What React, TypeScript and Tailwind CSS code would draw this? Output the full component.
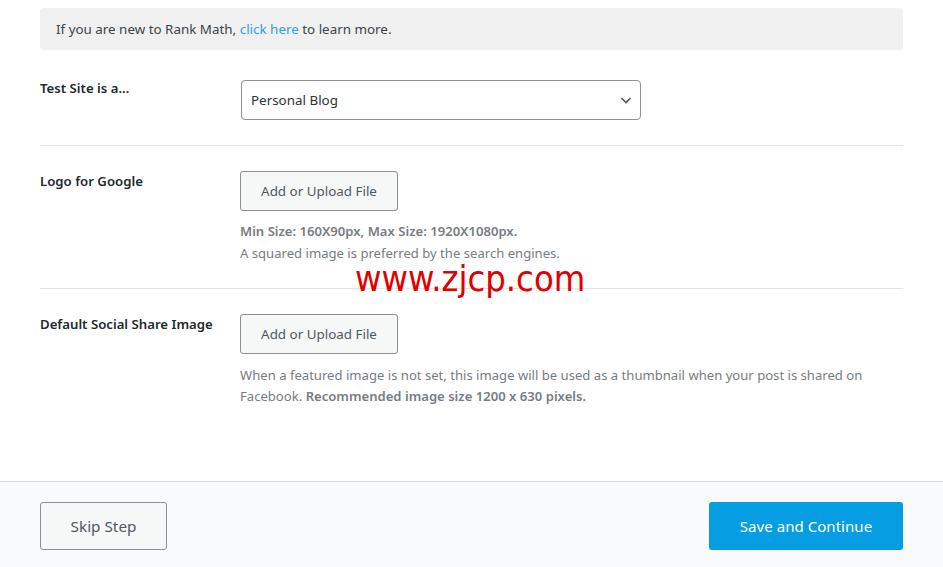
import React from "react";

export default function App() {
  return (
    <div
      className="relative w-[943px] h-[567px] bg-white overflow-hidden flex flex-col"
      style={{ fontFamily: '"Noto Sans", sans-serif' }}
    >
      <div className="flex-1 px-[40px] pt-[8px]">
        <div className="h-[42px] bg-[#f0f0f1] rounded-[4px] flex items-center px-[16px] text-[13.4px] text-[#3c434a]">
          <span>
            If you are new to Rank Math,{" "}
            <span className="text-[#2ea0e0]">click here</span> to learn more.
          </span>
        </div>

        <div className="flex pt-[30px] pb-[25px] border-b border-[#e2e4e7]">
          <div className="w-[201px] text-[13.2px] font-semibold text-[#23282d] -mt-[2px] leading-[20px]">
            Test Site is a...
          </div>
          <div className="w-[400px] h-[40px] border border-[#8c8f94] rounded-[4px] flex items-center justify-between pl-[9px] pr-[7px] text-[13.4px] text-[#2c3338]">
            <span>Personal Blog</span>
            <svg width="14" height="14" viewBox="0 0 14 14" fill="none">
              <path d="M2.5 5l4.5 4.5L11.5 5" stroke="#50575e" strokeWidth="1.6" />
            </svg>
          </div>
        </div>

        <div className="flex pt-[25px] pb-[24px] border-b border-[#e2e4e7]">
          <div className="w-[200px] text-[13.2px] font-semibold text-[#23282d] leading-[20px]">
            Logo for Google
          </div>
          <div>
            <div className="w-[158px] h-[40px] bg-[#f6f7f7] border border-[#8c8f94] rounded-[3px] flex items-center justify-center text-[13.4px] text-[#50575e]">
              Add or Upload File
            </div>
            <div className="mt-[9px] text-[13.1px] leading-[22px] text-[#787c82]">
              <div className="font-semibold">Min Size: 160X90px, Max Size: 1920X1080px.</div>
              <div>A squared image is preferred by the search engines.</div>
            </div>
          </div>
        </div>

        <div className="flex pt-[25px]">
          <div className="w-[200px] text-[13.2px] font-semibold text-[#23282d] leading-[20px]">
            Default Social Share Image
          </div>
          <div>
            <div className="w-[158px] h-[40px] bg-[#f6f7f7] border border-[#8c8f94] rounded-[3px] flex items-center justify-center text-[13.4px] text-[#50575e]">
              Add or Upload File
            </div>
            <div className="mt-[11px] w-[650px] text-[13.1px] leading-[21px] text-[#787c82]">
              When a featured image is not set, this image will be used as a thumbnail when your post is shared on Facebook.{" "}
              <span className="font-semibold">Recommended image size 1200 x 630 pixels.</span>
            </div>
          </div>
        </div>
      </div>

      <div className="h-[86px] bg-[#f9fafb] border-t border-[#dcdcde] flex items-start justify-between px-[40px] pt-[20px]">
        <div className="w-[127px] h-[48px] border border-[#8c8f94] rounded-[3px] bg-[#f6f7f7] flex items-center justify-center text-[15.3px] text-[#50575e]">
          Skip Step
        </div>
        <div className="w-[194px] h-[48px] rounded-[3px] bg-[#069de3] flex items-center justify-center text-[15.1px] text-white">
          Save and Continue
        </div>
      </div>

      <div
        className="absolute left-[355px] top-[261px] text-[36px] leading-[36px] text-[#e00000]"
        style={{ fontFamily: '"DejaVu Sans Condensed", "DejaVu Sans", sans-serif' }}
      >
        www.zjcp.com
      </div>
    </div>
  );
}
